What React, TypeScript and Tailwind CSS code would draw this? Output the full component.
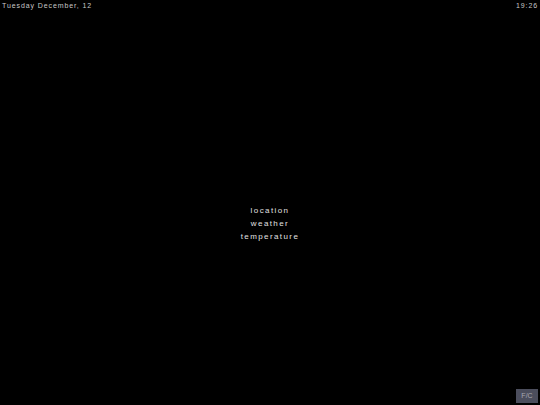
import React from "react";

export default function App() {
  return (
    <div
      className="relative w-[540px] h-[405px] bg-black text-[#d0d0d0] flex flex-col"
      style={{ fontFamily: '"Liberation Sans", Arial, sans-serif' }}
    >
      <div className="flex justify-between px-[2px] pt-[1px] text-[7px] leading-[10px] tracking-[0.9px] text-[#c8c8c8]">
        <span>Tuesday December, 12</span>
        <span>19:26</span>
      </div>
      <div className="flex-1 flex flex-col items-center justify-center pt-[30px] text-[8px] leading-[13px] tracking-[1.4px] text-[#e0e0e0]">
        <span>location</span>
        <span>weather</span>
        <span>temperature</span>
      </div>
      <div className="absolute right-[2px] bottom-[2px] w-[22px] h-[14px] bg-[#4b4d5c] text-[#a8a8b0] text-[7px] flex items-center justify-center">
        F/C
      </div>
    </div>
  );
}
